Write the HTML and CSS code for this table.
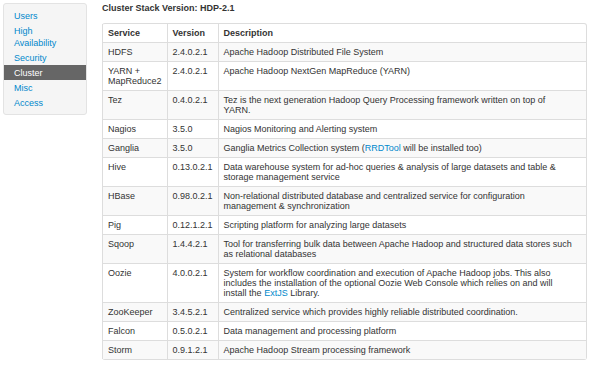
FILE: index.html
```html
<!DOCTYPE html>
<html lang="en">
<head>
  <meta charset="UTF-8" />
  <title>Cluster Stack</title>
  <link rel="stylesheet" href="styles.css">
</head>
<body>
  <div class="page">
    <ul class="side-nav">
      <li><a href="#">Users</a></li>
      <li><a href="#">High Availability</a></li>
      <li><a href="#">Security</a></li>
      <li class="active"><a href="#">Cluster</a></li>
      <li><a href="#">Misc</a></li>
      <li><a href="#">Access</a></li>
    </ul>

    <div class="content">
      <h5>Cluster Stack Version: HDP-2.1</h5>
      <table class="stack">
        <tr>
          <th class="col-service">Service</th>
          <th class="col-version">Version</th>
          <th>Description</th>
        </tr>
        <tr><td>HDFS</td><td>2.4.0.2.1</td><td>Apache Hadoop Distributed File System</td></tr>
        <tr><td>YARN + MapReduce2</td><td>2.4.0.2.1</td><td>Apache Hadoop NextGen MapReduce (YARN)</td></tr>
        <tr><td>Tez</td><td>0.4.0.2.1</td><td>Tez is the next generation Hadoop Query Processing framework written on top of YARN.</td></tr>
        <tr><td>Nagios</td><td>3.5.0</td><td>Nagios Monitoring and Alerting system</td></tr>
        <tr><td>Ganglia</td><td>3.5.0</td><td>Ganglia Metrics Collection system (<a href="#">RRDTool</a> will be installed too)</td></tr>
        <tr><td>Hive</td><td>0.13.0.2.1</td><td>Data warehouse system for ad-hoc queries &amp; analysis of large datasets and table &amp; storage management service</td></tr>
        <tr><td>HBase</td><td>0.98.0.2.1</td><td>Non-relational distributed database and centralized service for configuration management &amp; synchronization</td></tr>
        <tr><td>Pig</td><td>0.12.1.2.1</td><td>Scripting platform for analyzing large datasets</td></tr>
        <tr><td>Sqoop</td><td>1.4.4.2.1</td><td>Tool for transferring bulk data between Apache Hadoop and structured data stores such as relational databases</td></tr>
        <tr><td>Oozie</td><td>4.0.0.2.1</td><td>System for workflow coordination and execution of Apache Hadoop jobs. This also includes the installation of the optional Oozie Web Console which relies on and will install the <a href="#">ExtJS</a> Library.</td></tr>
        <tr><td>ZooKeeper</td><td>3.4.5.2.1</td><td>Centralized service which provides highly reliable distributed coordination.</td></tr>
        <tr><td>Falcon</td><td>0.5.0.2.1</td><td>Data management and processing platform</td></tr>
        <tr><td>Storm</td><td>0.9.1.2.1</td><td>Apache Hadoop Stream processing framework</td></tr>
      </table>
    </div>
  </div>
</body>
</html>
```

FILE: styles.css
```css
body {
  margin: 0;
  font-family: "Liberation Sans", Arial, sans-serif;
  font-size: 9px;
  color: #333;
  background: #fff;
}

a {
  color: #0088cc;
  text-decoration: none;
}

.page {
  display: flex;
  align-items: flex-start;
  gap: 15px;
  padding: 3px 4px 3px 3px;
}

.side-nav {
  list-style: none;
  margin: 0;
  padding: 4px 0;
  width: 84px;
  box-sizing: border-box;
  background-color: #f5f5f5;
  border: 1px solid #e3e3e3;
  border-radius: 3px;
  flex-shrink: 0;
}

.side-nav li a {
  display: block;
  padding: 1.5px 10px;
  line-height: 12px;
}

.side-nav li.active a {
  background-color: #666;
  color: #fff;
}

.content {
  flex: 1;
}

h5 {
  margin: 0 0 10px;
  font-size: 9px;
  line-height: 10px;
  font-weight: bold;
  color: #333;
}

/* bordered + striped table with rounded outer corners */
.stack {
  width: 100%;
  border-collapse: separate;
  border-spacing: 0;
  border: 1px solid #ddd;
  border-left: 0;
  border-radius: 3px;
}

.stack th,
.stack td {
  border-left: 1px solid #ddd;
  border-top: 1px solid #ddd;
  padding: 4px 5px;
  line-height: 10px;
  text-align: left;
  vertical-align: top;
}

.stack tr:first-child th {
  border-top: 0;
}

.stack th:last-child,
.stack td:last-child {
  padding-right: 12px;
}

.stack th {
  font-weight: bold;
}

.stack tr:nth-child(even) td {
  background-color: #f9f9f9;
}

.col-service { width: 53px; }
.col-version { width: 40px; }
```
